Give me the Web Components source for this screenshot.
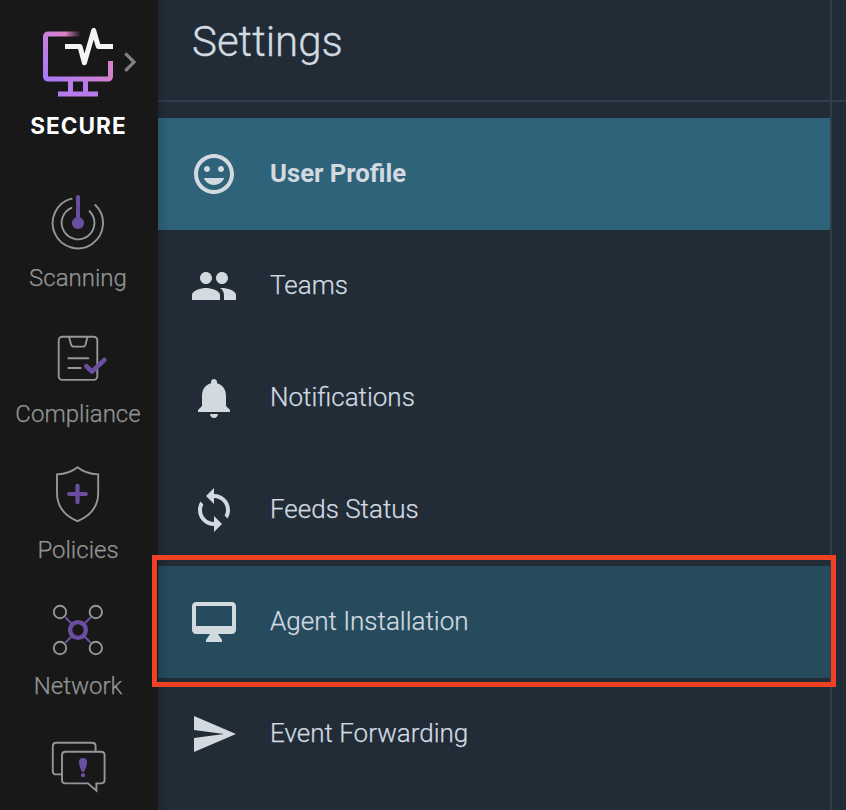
<!DOCTYPE html>
<html lang="en">
<head>
<meta charset="utf-8">
<title>Settings</title>
<style>
html,body{margin:0;height:100%;overflow:hidden;background:#212c37}
body{font-family:Roboto,"Liberation Sans",sans-serif;font-weight:300;-webkit-font-smoothing:antialiased}
</style>
</head>
<body>
<app-shell></app-shell>
<script>
const define=(name,html,setup)=>customElements.define(name,class extends HTMLElement{
  constructor(){super();const t=document.createElement('template');t.innerHTML=html;
    this.attachShadow({mode:'open'}).append(t.content.cloneNode(true));}
  connectedCallback(){if(setup)setup(this);}
});

const navArt={
scanning:['48 190 60 60','<path d="M71.7 198.7A25.2 25.2 0 1 0 95.3 205M71.5 207.9A16.4 16.4 0 1 0 89.5 211.2"/><path class="p" stroke-width="4" d="M78 197V222"/><circle class="f" cx="78" cy="223" r="6.1"/>'],
compliance:['48 326 60 60','<rect x="58.7" y="336.7" width="38.6" height="43.2" rx="3.6"/><path d="M69 337L71 344.5Q71.5 346.6 73.8 346.6H83Q85 346.6 85.6 344.5L87.4 337M68.3 358.3H88.3M68.3 368H80.7"/><path class="p" stroke-width="4.6" stroke-linejoin="round" d="M86.3 366.2L91.9 371.6L104.4 360"/>'],
policies:['48 462 60 60','<path d="M77.5 467.2Q69.5 473.8 57 474.4V493C57 506.5 64 515.5 77.5 521.2C91 515.5 98.2 506.5 98.2 493V474.4Q85.5 473.8 77.5 467.2Z"/><path class="p" stroke-width="4.2" d="M69.2 494H85.8M77.5 485.8V502.2"/>'],
network:['48 598 60 60','<path class="p" stroke-width="2.2" d="M66 618L90 642M90 618L66 642"/><circle cx="60" cy="612" r="6.2"/><circle cx="95.8" cy="612" r="6.2"/><circle cx="60" cy="648" r="6.2"/><circle cx="95.8" cy="648" r="6.2"/><circle class="p" cx="78" cy="630" r="7.9" stroke-width="4.4" style="fill:#181818"/>'],
alerts:['48 734 60 60','<path d="M61.5 774.4H56.3Q52.8 774.4 52.8 770.9V746.3Q52.8 742.8 56.3 742.8H92Q95.6 742.8 95.6 746.3V751"/><path stroke-linejoin="miter" d="M65.5 751.8H101Q104.6 751.8 104.6 755.3V780Q104.6 783.4 101 783.4H96.4V790.6L88 783.4H65.5Q62 783.4 62 780V755.3Q62 751.8 65.5 751.8Z"/><path class="f" d="M83 758Q87.2 758 87.1 762.2Q87 765.5 84.8 770.4Q84.2 772 83 772Q81.8 772 81.2 770.4Q79 765.5 78.9 762.2Q78.8 758 83 758Z"/><circle class="f" cx="83" cy="775.2" r="2.1"/>']};
const rowArt={
mood:'<path d="M11.99 2C6.47 2 2 6.48 2 12s4.47 10 9.99 10C17.52 22 22 17.52 22 12S17.52 2 11.99 2zM12 20c-4.42 0-8-3.58-8-8s3.58-8 8-8 8 3.58 8 8-3.58 8-8 8zm3.5-9c.83 0 1.5-.67 1.5-1.5S16.33 8 15.5 8 14 8.67 14 9.5s.67 1.5 1.5 1.5zm-7 0c.83 0 1.5-.67 1.5-1.5S9.33 8 8.5 8 7 8.67 7 9.5 7.67 11 8.5 11zM12 17.5c2.33 0 4.31-1.46 5.11-3.5H6.89c.8 2.04 2.78 3.5 5.11 3.5z"/>',
people:'<path d="M16 11c1.66 0 2.99-1.34 2.99-3S17.66 5 16 5s-3 1.34-3 3 1.34 3 3 3zm-8 0c1.66 0 2.99-1.34 2.99-3S9.66 5 8 5 5 6.34 5 8s1.34 3 3 3zm0 2c-2.33 0-7 1.17-7 3.5V19h14v-2.5c0-2.33-4.67-3.5-7-3.5zm8 0c-.29 0-.62.02-.97.05 1.16.84 1.97 1.97 1.97 3.45V19h6v-2.5c0-2.33-4.67-3.5-7-3.5z"/>',
bell:'<path d="M12 22c1.1 0 2-.9 2-2h-4c0 1.1.89 2 2 2zm6-6v-5c0-3.07-1.64-5.64-4.5-6.32V4c0-.83-.67-1.5-1.5-1.5s-1.5.67-1.5 1.5v.68C7.63 5.36 6 7.92 6 11v5l-2 2v1h16v-1l-2-2z"/>',
sync:'<path d="M12 4V1L8 5l4 4V6c3.31 0 6 2.69 6 6 0 1.01-.25 1.97-.7 2.8l1.46 1.46C19.54 15.03 20 13.57 20 12c0-4.42-3.58-8-8-8zm0 14c-3.31 0-6-2.69-6-6 0-1.01.25-1.97.7-2.8L5.24 7.74C4.46 8.97 4 10.43 4 12c0 4.42 3.58 8 8 8v3l4-4-4-4v3z"/>',
monitor:'<path d="M21 2H3c-1.1 0-2 .9-2 2v12c0 1.1.9 2 2 2h7l-2 3v1h8v-1l-2-3h7c1.1 0 2-.9 2-2V4c0-1.1-.9-2-2-2zm0 12H3V4h18v10z"/>',
send:'<path d="M2.01 21L23 12 2.01 3 2 10l15 2-15 2z"/>'};

define('brand-logo',`<style>
:host{display:block;height:154px;flex:none;color:#fff}
svg{display:block;width:158px;height:108px}
span{display:block;text-align:center;font:700 22.6px/36px Inter,sans-serif;letter-spacing:1px;width:157px}
</style>
<svg viewBox="0 0 158 108" fill="none" stroke-width="5">
<defs><linearGradient id="g" gradientUnits="userSpaceOnUse" x1="45" y1="79" x2="105" y2="45"><stop stop-color="#a878f8"/><stop offset="1" stop-color="#dc82c4"/></linearGradient>
<linearGradient id="t" gradientUnits="userSpaceOnUse" x1="43" y1="0" x2="81" y2="0"><stop stop-color="#c77fdd"/><stop offset=".58" stop-color="#d982c8"/><stop offset="1" stop-color="#d982c8" stop-opacity="0"/></linearGradient>
<linearGradient id="l" gradientUnits="userSpaceOnUse" x1="0" y1="36" x2="0" y2="80"><stop stop-color="#c880dc"/><stop offset="1" stop-color="#a878f8"/></linearGradient></defs>
<path stroke="url(#t)" d="M50 34H81"/>
<path stroke="url(#l)" d="M50.1 34H48.5Q45.5 34 45.5 37V76Q45.5 79 48.5 79"/>
<path stroke="url(#g)" d="M48 79H107.5Q110.5 79 110.5 76V61"/>
<path stroke="#b67ceb" d="M70.5 81V94M85.5 81V94M58 94H98"/>
<path stroke="#f5f5f5" stroke-linejoin="round" d="M65 46.5H80L84.4 62.8L93.7 30.5L98.3 46.5H113"/>
<path stroke="#828282" stroke-width="3.2" d="M125.3 53.4L134 62L125.3 70.8"/>
</svg><span><slot></slot></span>`);

define('nav-item',`<style>
:host{display:flex;flex-direction:column;align-items:center;height:136px;padding-top:36px;box-sizing:border-box;color:#929596;flex:none;width:156px}
svg{width:60px;height:60px;fill:none;stroke:#929799;stroke-width:1.9;stroke-linecap:round;flex:none}
.p{stroke:#6a4fa0}.f{fill:#6a4fa0;stroke:none}
span{font-size:24px;line-height:28px;margin-top:14px;white-space:nowrap;-webkit-text-stroke:.25px}
</style><svg></svg><span><slot></slot></span>`,
el=>{const s=el.shadowRoot.querySelector('svg'),a=navArt[el.getAttribute('icon')];s.setAttribute('viewBox',a[0]);s.innerHTML=a[1];});

define('setting-row',`<style>
:host{display:flex;align-items:center;height:112px;box-sizing:border-box;padding-left:32px;gap:32px;color:#d2dae0;font-size:26px;line-height:32px}
:host([selected]){background:#2f6379;font-weight:700;font-size:25.7px}
:host([hovered]){background:#254b5c}
svg{width:48px;height:48px;fill:#d2dae0;flex:none}
span{padding-bottom:2px;white-space:nowrap;-webkit-text-stroke:.25px}
:host([selected]) span{-webkit-text-stroke:0}
</style><svg viewBox="0 0 24 24"></svg><span><slot></slot></span>`,
el=>el.shadowRoot.querySelector('svg').innerHTML=rowArt[el.getAttribute('icon')]);

define('side-nav',`<style>:host{display:flex;flex-direction:column;width:158px;height:100%;overflow:hidden;background:#181818}</style><slot></slot>`);

define('settings-panel',`<style>
:host{display:flex;flex-direction:column;height:100%;color:#d2dae0}
header{height:100px;border-bottom:2px solid #303d4d;flex:none;box-sizing:content-box}
h1{margin:0;padding:16px 0 0 34px;font-size:42px;line-height:52px;font-weight:300;-webkit-text-stroke:.35px}
main{width:672px;flex:1;min-height:0;overflow:hidden;border-right:2px solid #303d4d;padding-top:16px}
:host::before{content:"";position:absolute;left:158px;top:0;width:12px;height:810px;background:linear-gradient(90deg,#0002,#0000)}
.top{width:672px;height:100px;border-right:2px solid #303d4d}
</style><header><div class="top"><h1><slot name="title"></slot></h1></div></header><main><slot></slot></main>`);

define('focus-frame',`<style>:host{position:absolute;left:152px;top:555px;width:684px;height:132px;box-sizing:border-box;border:5px solid #f04124}</style>`);

define('app-shell',`<style>
:host{display:grid;grid-template-columns:158px 1fr;width:846px;height:810px;overflow:hidden;position:relative}
</style>
<side-nav><brand-logo>SECURE</brand-logo>
<nav-item icon="scanning">Scanning</nav-item><nav-item icon="compliance">Compliance</nav-item><nav-item icon="policies">Policies</nav-item><nav-item icon="network">Network</nav-item><nav-item icon="alerts"></nav-item></side-nav>
<settings-panel><span slot="title">Settings</span>
<setting-row icon="mood" selected>User Profile</setting-row><setting-row icon="people">Teams</setting-row><setting-row icon="bell">Notifications</setting-row><setting-row icon="sync">Feeds Status</setting-row><setting-row icon="monitor" hovered>Agent Installation</setting-row><setting-row icon="send">Event Forwarding</setting-row></settings-panel>
<focus-frame></focus-frame>`);
</script>
</body>
</html>
